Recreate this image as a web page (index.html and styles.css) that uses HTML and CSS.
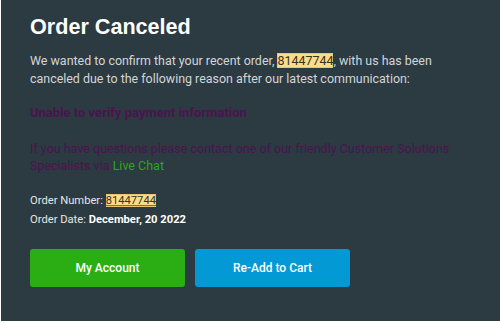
FILE: index.html
```html
<!DOCTYPE html>
<html>
<head>
<meta charset="utf-8">
<link rel="stylesheet" href="styles.css">
</head>
<body>
<div class="panel">
  <h1 class="title">Order Canceled</h1>
  <p class="intro">We wanted to confirm that your recent order, <span class="hl">81447744</span>, with us has been canceled due to the following reason after our latest communication:</p>
  <p class="reason">Unable to verify payment information</p>
  <p class="contact">If you have questions please contact one of our friendly Customer Solutions Specialists via <a class="chat" href="#">Live Chat</a></p>
  <div class="meta">
    <div class="meta-row">Order Number: <span class="hl hl-num">81447744</span></div>
    <div class="meta-row">Order Date: <strong class="date">December, 20 2022</strong></div>
  </div>
  <div class="actions">
    <a class="btn btn-green" href="#">My Account</a>
    <a class="btn btn-blue" href="#">Re-Add to Cart</a>
  </div>
</div>
</body>
</html>
```

FILE: styles.css
```css
html, body {
  margin: 0;
  padding: 0;
  background: #ffffff;
}
body {
  font-family: Roboto, "Liberation Sans", Arial, sans-serif;
}
.panel {
  margin-left: 1px;
  height: 321px;
  box-sizing: border-box;
  background: #2c3a41;
  padding: 14px 29px 0 29px;
}
.title {
  margin: 0;
  font-family: "Liberation Sans", Arial, sans-serif;
  font-size: 21.6px;
  line-height: 26px;
  font-weight: bold;
  color: #ffffff;
}
.intro {
  margin: 12px 0 0 0;
  font-size: 12.45px;
  line-height: 18px;
  color: #d3d6d8;
}
.hl {
  background: #fbdc8a;
  color: #3a3320;
  box-shadow: 0 0 0 1px #e7c66f inset;
}
.hl-num {
  text-decoration: underline;
  text-decoration-color: #3a9a20;
}
.reason {
  margin: 16px 0 0 0;
  font-size: 13px;
  line-height: 18px;
  font-weight: bold;
  color: #4d1250;
}
.contact {
  margin: 18px 0 0 0;
  font-size: 12.5px;
  line-height: 17px;
  color: #4d1250;
}
.chat {
  color: #2ea51c;
  text-decoration: none;
}
.meta {
  margin-top: 17px;
  font-size: 11.2px;
  line-height: 19px;
  color: #e4e6e7;
}
.date {
  color: #ffffff;
  font-weight: bold;
}
.actions {
  display: flex;
  gap: 10px;
  margin-top: 20px;
}
.btn {
  width: 155px;
  height: 38px;
  border-radius: 3px;
  display: flex;
  align-items: center;
  justify-content: center;
  color: #ffffff;
  font-size: 12px;
  font-weight: 500;
  text-decoration: none;
}
.btn-green {
  background: #2bae14;
}
.btn-blue {
  background: #0399d5;
}
```
